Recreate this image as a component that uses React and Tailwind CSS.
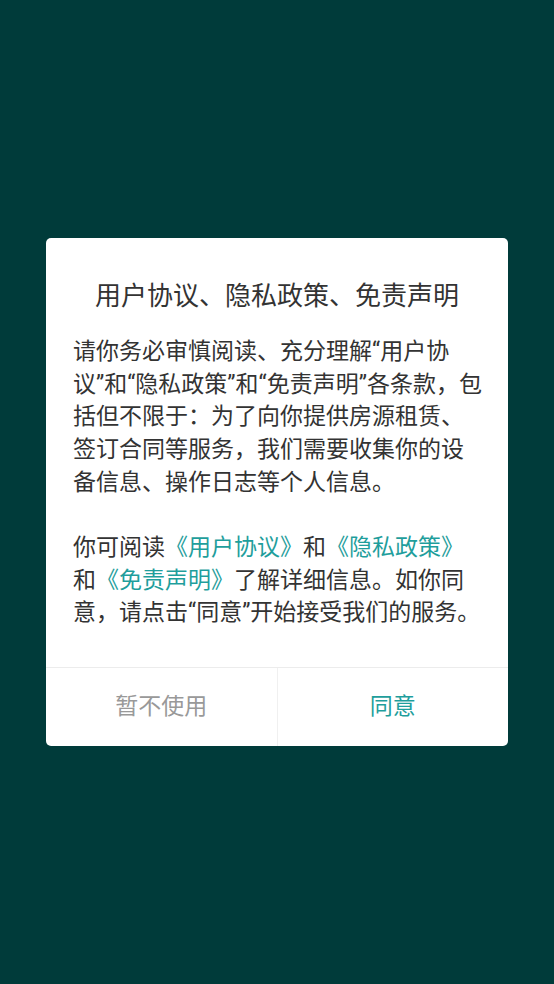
// Privacy consent dialog shown on first launch. Lines are broken by hand so
// the wrapping matches the design regardless of font metrics.
const FONT = { fontFamily: 'Roboto, "Noto Sans CJK SC", sans-serif' }

function Link({ children }) {
  return <span className="text-[#1f9e9c]">{children}</span>
}

export default function App() {
  return (
    <div className="flex h-[984px] w-full items-center justify-center bg-[#003b3a]" style={FONT}>
      <div className="w-[462px] overflow-hidden rounded-[5px] bg-white">
        <div className="px-[27px] pt-[41px] pb-[37px]">
          <h1 className="text-center text-[26px] leading-[34px] text-[#333]">
            用户协议、隐私政策、免责声明
          </h1>
          <div className="mt-[23px] whitespace-nowrap text-[23px] leading-[32.7px] text-[#333]">
            <div>请你务必审慎阅读、充分理解“用户协</div>
            <div>议”和“隐私政策”和“免责声明”各条款，包</div>
            <div>括但不限于：为了向你提供房源租赁、</div>
            <div>签订合同等服务，我们需要收集你的设</div>
            <div>备信息、操作日志等个人信息。</div>
            <div>&nbsp;</div>
            <div>
              你可阅读<Link>《用户协议》</Link>和<Link>《隐私政策》</Link>
            </div>
            <div>
              和<Link>《免责声明》</Link>了解详细信息。如你同
            </div>
            <div>意，请点击“同意”开始接受我们的服务。</div>
          </div>
        </div>
        <div className="flex h-[79px] border-t border-[#ececec]">
          <button
            type="button"
            className="flex-1 border-r border-[#f0f0f0] text-[23px] text-[#999]"
          >
            暂不使用
          </button>
          <button type="button" className="flex-1 text-[23px] text-[#1f9e9c]">
            同意
          </button>
        </div>
      </div>
    </div>
  )
}
